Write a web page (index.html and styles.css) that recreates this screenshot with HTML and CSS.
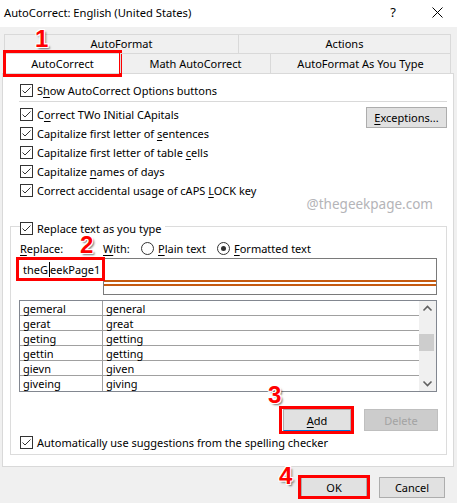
FILE: index.html
```html
<!DOCTYPE html>
<html lang="en">
<head>
    <meta charset="UTF-8">
    <meta name="viewport" content="width=device-width, initial-scale=1.0">
    <title>AutoCorrect: English (United States)</title>
    <link rel="stylesheet" href="styles.css">
</head>
<body>
    <div class="titlebar">
        <span class="title">AutoCorrect: English (United States)</span>
        <span class="help">?</span>
        <svg class="close" width="11" height="11" viewBox="0 0 11 11"><path d="M0.5 0.5 L10.5 10.5 M10.5 0.5 L0.5 10.5" stroke="#000" stroke-width="1"/></svg>
    </div>

    <div class="tabs">
        <div class="tab-row">
            <div class="tab t-format">AutoFormat</div>
            <div class="tab t-actions last">Actions</div>
        </div>
        <div class="tab-row">
            <div class="tab t-correct selected">AutoCorrect<span class="red-box"></span><span class="step step-1">1</span></div>
            <div class="tab t-math">Math AutoCorrect</div>
            <div class="tab t-type last">AutoFormat As You Type</div>
        </div>
    </div>

    <div class="panel">
        <div class="check-row first"><span class="cb"></span><span>S<u>h</u>ow AutoCorrect Options buttons</span></div>
        <div class="separator"></div>

        <div class="options">
            <div class="option-list">
                <div class="check-row"><span class="cb"></span><span>C<u>o</u>rrect TWo INitial CApitals</span></div>
                <div class="check-row"><span class="cb"></span><span>Capitalize first letter of <u>s</u>entences</span></div>
                <div class="check-row"><span class="cb"></span><span>Capitalize first letter of table <u>c</u>ells</span></div>
                <div class="check-row"><span class="cb"></span><span>Capitalize <u>n</u>ames of days</span></div>
                <div class="check-row"><span class="cb"></span><span>Correct accidental usage of cAPS <u>L</u>OCK key</span></div>
            </div>
            <button class="btn exceptions"><u>E</u>xceptions...</button>
        </div>

        <div class="watermark">@thegeekpage.com</div>

        <div class="group">
            <div class="group-title"><span class="cb"></span><span>Replace text as you type</span></div>

            <div class="with-row">
                <span class="replace-label"><u>R</u>eplace:</span>
                <span class="with-label"><u>W</u>ith:</span>
                <span class="radio"></span><span class="radio-text plain"><u>P</u>lain text</span>
                <span class="radio on"></span><span class="radio-text"><u>F</u>ormatted text</span>
                <span class="step step-2">2</span>
            </div>

            <div class="inputs">
                <div class="replace-box"><span>the<span class="caret">G</span>eekPage1</span><span class="red-box"></span></div>
                <div class="with-box"><div class="rule"></div><div class="rule"></div></div>
            </div>

            <div class="list">
                <div class="rows">
                    <div class="row"><span class="from">gemeral</span><span>general</span></div>
                    <div class="row"><span class="from">gerat</span><span>great</span></div>
                    <div class="row"><span class="from">geting</span><span>getting</span></div>
                    <div class="row"><span class="from">gettin</span><span>getting</span></div>
                    <div class="row"><span class="from">gievn</span><span>given</span></div>
                    <div class="row"><span class="from">giveing</span><span>giving</span></div>
                </div>
                <div class="scrollbar">
                    <svg width="17" height="15" viewBox="0 0 17 15"><path d="M4.5 9.5 L8.5 5.5 L12.5 9.5" fill="none" stroke="#606060" stroke-width="1.6"/></svg>
                    <div class="track"><div class="thumb"></div></div>
                    <svg width="17" height="15" viewBox="0 0 17 15"><path d="M4.5 5.5 L8.5 9.5 L12.5 5.5" fill="none" stroke="#606060" stroke-width="1.6"/></svg>
                </div>
            </div>

            <div class="list-buttons">
                <button class="btn add"><u>A</u>dd<span class="red-box"></span><span class="step step-3">3</span></button>
                <button class="btn delete" disabled>Delete</button>
            </div>

            <div class="check-row auto"><span class="cb"></span><span>Automatically use su<u>g</u>gestions from the spelling checker</span></div>
        </div>
    </div>

    <div class="dialog-buttons">
        <button class="btn ok">OK<span class="red-box"></span><span class="step step-4">4</span></button>
        <button class="btn cancel">Cancel</button>
    </div>
</body>
</html>
```

FILE: styles.css
```css
body {
    margin: 0;
    background-color: #f0f0f0;
    font-family: "Noto Sans", "Open Sans", sans-serif;
    font-size: 11px;
    color: #000;
    width: 457px;
    height: 503px;
    overflow: hidden;
}
u {
    text-decoration-thickness: 1px;
    text-underline-offset: 2px;
}
.titlebar {
    height: 27px;
    background-color: #fff;
    display: flex;
    align-items: center;
    padding-left: 4px;
}
.title {
    font-size: 11.2px;
    flex: 1;
    padding-bottom: 3px;
}
.help {
    font-size: 13px;
    margin-right: 36px;
    padding-bottom: 3px;
}
.close {
    margin-right: 14px;
    margin-bottom: 3px;
}

/* tabs */
.tabs {
    margin: 7px 0 0 4px;
    width: 447px;
}
.tab-row {
    display: flex;
}
.tab-row:first-child {
    height: 19px;
}
.tab-row:last-child {
    height: 20px;
}
.tab {
    box-sizing: border-box;
    border-left: 1px solid #d9d9d9;
    border-top: 1px solid #d9d9d9;
    display: flex;
    align-items: center;
    justify-content: center;
    position: relative;
    padding-bottom: 1px;
}
.tab.last {
    border-right: 1px solid #d9d9d9;
}
.t-format { width: 234px; }
.t-actions { width: 213px; }
.t-correct { width: 116px; }
.t-math { width: 150px; }
.t-type { width: 181px; }
.tab.selected {
    background-color: #fff;
}

/* red highlight boxes and step numbers */
.red-box {
    position: absolute;
    border: 3px solid #ff0000;
    pointer-events: none;
}
.t-correct .red-box {
    top: -4px;
    left: -2px;
    right: -2px;
    bottom: -4px;
}
.step {
    position: absolute;
    font-family: "Liberation Sans", Arial, sans-serif;
    font-weight: bold;
    font-size: 24px;
    line-height: 18px;
    color: #ff0000;
    text-shadow: -1px -1px 0 #fff, 1px -1px 0 #fff, -1px 1px 0 #fff, 1px 1px 0 #fff,
                 2px 2px 2px rgba(0, 0, 0, 0.55);
}
.step-1 {
    left: 30px;
    top: -24px;
}

/* main panel */
.panel {
    margin-left: 2px;
    width: 437px;
    height: 385px;
    background-color: #fff;
    border: 1px solid #d9d9d9;
    padding: 7px 6px 0 7px;
}
.check-row {
    display: flex;
    align-items: center;
    height: 19px;
    margin-left: 10px;
    white-space: nowrap;
}
.cb {
    width: 11px;
    height: 11px;
    border: 1px solid #333;
    background: #fff url("data:image/svg+xml,%3Csvg xmlns='http://www.w3.org/2000/svg' width='11' height='11'%3E%3Cpath d='M1.5 5.5 L4 8 L9.5 2.5' fill='none' stroke='%23333' stroke-width='1'/%3E%3C/svg%3E") no-repeat;
    margin-right: 4px;
    flex: none;
}
.separator {
    height: 1px;
    background-color: #d9d9d9;
    margin: 1px 0 0 9px;
}
.options {
    display: flex;
    justify-content: space-between;
    margin-top: 3px;
}
.btn {
    font-family: inherit;
    font-size: 11px;
    background-color: #e1e1e1;
    border: 1px solid #adadad;
    height: 22px;
    padding: 0;
    color: #000;
    position: relative;
}
.exceptions {
    width: 81px;
    height: 21px;
    margin-top: 2px;
}
.watermark {
    text-align: right;
    font-size: 13.5px;
    line-height: 16px;
    color: #b4b4b8;
    margin: -4px 14px 0 0;
    height: 16px;
}

/* replace group */
.group {
    margin-top: 14px;
    border: 1px solid #dcdcdc;
    height: 227px;
    padding: 0 7px 0 6px;
}
.group-title {
    display: flex;
    width: max-content;
    align-items: center;
    background-color: #fff;
    margin: -6px 0 0 3px;
    height: 14px;
    padding-right: 3px;
}
.with-row {
    display: flex;
    align-items: center;
    height: 16px;
    margin: 5px 0 0 3px;
    position: relative;
}
.replace-label { width: 83px; }
.with-label { width: 38px; }
.radio {
    width: 11px;
    height: 11px;
    border: 1px solid #333;
    border-radius: 50%;
    margin-right: 4px;
    position: relative;
}
.radio.on::after {
    content: "";
    position: absolute;
    left: 3px;
    top: 3px;
    width: 5px;
    height: 5px;
    border-radius: 50%;
    background-color: #333;
}
.radio-text {
    margin-right: 6px;
}
.radio-text.plain { width: 53px; }
.step-2 {
    left: 60px;
    top: -4px;
}
.inputs {
    display: flex;
    margin-top: 2px;
}
.replace-box {
    box-sizing: border-box;
    width: 86px;
    height: 22px;
    border: 1px solid #7a7a7a;
    border-right: none;
    padding-left: 5px;
    display: flex;
    align-items: center;
    position: relative;
}
.replace-box .red-box {
    top: -2px;
    left: -2px;
    right: -2px;
    bottom: -2px;
}
.caret {
    border-right: 1px solid #000;
    padding-right: 1px;
    line-height: 12px;
}
.with-box {
    box-sizing: border-box;
    width: 334px;
    height: 37px;
    border: 1px solid #7a7a7a;
    padding-top: 21px;
}
.rule {
    height: 2px;
    background-color: #c55a11;
    margin-bottom: 2px;
}
.list {
    display: flex;
    margin: 5px 0 0 2px;
    width: 416px;
    height: 90px;
    border: 1px solid #828790;
}
.rows {
    flex: 1;
}
.row {
    display: flex;
    height: 14px;
    border-bottom: 1px solid #a0a0a0;
    align-items: center;
}
.row:last-child {
    border-bottom: none;
    height: 15px;
}
.row span {
    padding-left: 3px;
}
.row .from {
    width: 79px;
    border-right: 1px solid #a0a0a0;
    height: 100%;
    display: flex;
    align-items: center;
}
.scrollbar {
    width: 17px;
    background-color: #f0f0f0;
    display: flex;
    flex-direction: column;
}
.scrollbar svg {
    display: block;
}
.track {
    flex: 1;
}
.thumb {
    margin-top: 18px;
    width: 15px;
    height: 17px;
    background-color: #cdcdcd;
}
.list-buttons {
    display: flex;
    justify-content: flex-end;
    gap: 13px;
    margin: 17px 1px 0 0;
}
.add {
    width: 68px;
    border-bottom: 1px solid #0078d7;
}
.add .red-box {
    top: -4px;
    left: -5px;
    right: -4px;
    bottom: -4px;
}
.step-3 {
    left: -16px;
    top: -24px;
}
.delete {
    width: 74px;
    background-color: #cccccc;
    border-color: #bfbfbf;
    color: #a3a3a3;
}
.check-row.auto {
    margin: 2px 0 0 3px;
    height: 18px;
}

/* dialog buttons */
.dialog-buttons {
    display: flex;
    justify-content: flex-end;
    gap: 12px;
    margin: 10px 12px 0 0;
}
.ok, .cancel {
    width: 66px;
    height: 21px;
}
.ok .red-box {
    top: -3px;
    left: -4px;
    right: -4px;
    bottom: -2px;
}
.step-4 {
    left: -23px;
    top: -11px;
}
```
